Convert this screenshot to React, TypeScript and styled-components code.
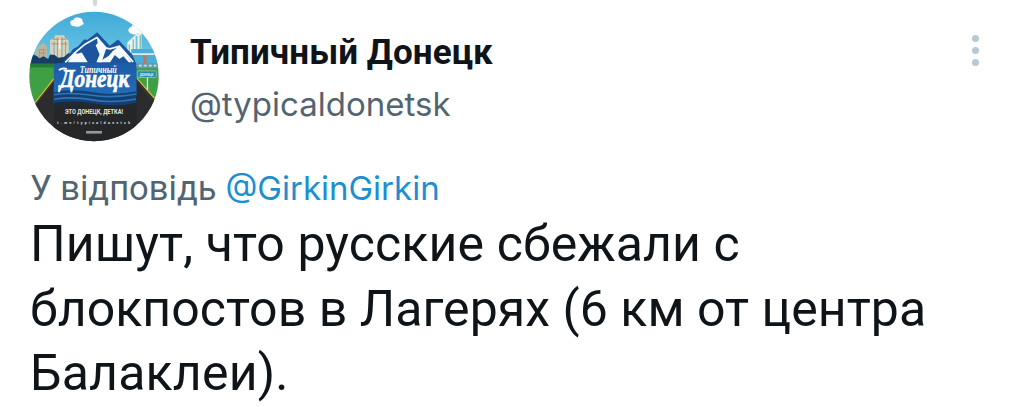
import React from "react";
import styled, { createGlobalStyle } from "styled-components";

interface LineProps {
  $spacing: number;
}

const App = () => {
  return (
    <>
      <GlobalStyle />
      <Tweet>
        <ThreadLine />
        <Header>
          <Avatar />
          <Names>
            <DisplayName>Типичный Донецк</DisplayName>
            <Handle>@typicaldonetsk</Handle>
          </Names>
          <MoreButton aria-label="More">
            <Dot />
            <Dot />
            <Dot />
          </MoreButton>
        </Header>
        <Reply>
          <ReplyText>У відповідь</ReplyText>
          <Mention href="#">@GirkinGirkin</Mention>
        </Reply>
        <Body>
          <Line $spacing={0.12}>Пишут, что русские сбежали с</Line>
          <Line $spacing={0.05}>блокпостов в Лагерях (6 км от центра</Line>
          <Line $spacing={0.2}>Балаклеи).</Line>
        </Body>
      </Tweet>
    </>
  );
};

const Avatar = () => (
  <AvatarSvg viewBox="28 34 394 394">
    <defs>
      <clipPath id="round">
        <circle cx="225" cy="231" r="196" />
      </clipPath>
      <linearGradient id="sky" x1="0" y1="0" x2="0" y2="1">
        <stop offset="0" stopColor="#3fa9d6" />
        <stop offset="1" stopColor="#74cbe8" />
      </linearGradient>
      <linearGradient id="badge" x1="0" y1="0" x2="0" y2="1">
        <stop offset="0" stopColor="#1d5ba8" />
        <stop offset="1" stopColor="#2272bf" />
      </linearGradient>
    </defs>
    <g clipPath="url(#round)">
      <rect x="20" y="30" width="410" height="180" fill="url(#sky)" />
      {/* clouds */}
      <path d="M154 72q-4-10 8-12q6-12 18-7q12 2 10 11q8 6-2 12q-14 8-22 2q-10 2-12-6z" fill="#fff" />
      <path d="M329 92q0-10 10-12q2-8 10-6l20-14 10 46q-8-8-18-6q-14 6-20 2q-10-2-12-10z" fill="#fff" />
      {/* buildings on the left */}
      <path d="M48 190v-38l12-16 12-8 10 12v50z" fill="#b9b5a5" />
      <path d="M92 182v-62l12-4 4-10h26l4 10 10 6v60z" fill="#d9d3bd" />
      <path d="M100 118h40M96 132h48M56 150h22M58 160h20" stroke="#c08a4e" strokeWidth="3" />
      <path d="M104 124v50M114 112v62M128 112v62M139 124v50M60 152v20M72 152v20" stroke="#7fa3ab" strokeWidth="3" />
      <path d="M121 118v30" stroke="#f6f2df" strokeWidth="5" />
      <path d="M28 210v-38l10-8 12 4 10 8 12-6 14 8 6-14 14 2 10 8 18-2 14-12 20 10v50z" fill="#173d64" />
      {/* buildings on the right */}
      <path d="M326 128l26-24 17-6v82h-43z" fill="#e9f4f2" />
      <path d="M332 134v40M344 118v50" stroke="#7fc0a4" strokeWidth="4" />
      <path d="M354 108v56" stroke="#75c3dc" strokeWidth="6" />
      <path d="M365 106v56" stroke="#50a985" strokeWidth="3" />
      <path d="M338 148h84v56h-84z" fill="#4caed8" />
      <path d="M340 163h72" stroke="#d7edf0" strokeWidth="5" />
      <path d="M374 168h10v22h-10z" fill="#cf7153" />
      <path d="M338 190h84v18h-84z" fill="#5c9db5" />
      <path d="M346 198h68" stroke="#e0d7c0" strokeWidth="5" strokeDasharray="9 6" />
      {/* grass and road */}
      <path d="M20 192h86v130H20zM350 206h80v120h-80z" fill="#3e9f43" />
      <path d="M20 192h86v12H20z" fill="#267c3b" />
      <path d="M104 236l-62 78v120h366V296l-55-62z" fill="#2b2c2e" />
      <path d="M104 237l-60 76M354 235l54 62" stroke="#d8b63f" strokeWidth="4" fill="none" />
      <path d="M104 245l-56 72M354 243l48 60" stroke="#4a3c2c" strokeWidth="3" fill="none" />
      <path d="M104 290h250v142H104z" fill="#252628" />
      {/* road sign */}
      <path d="M387 232v39" stroke="#e6eee8" strokeWidth="4" />
      <rect x="356" y="214" width="58" height="20" rx="3" fill="#258cad" stroke="#a1d4d5" strokeWidth="2" />
      <SvgText x="364" y="229" fontSize="11" textLength="42">ДОНЕЦК</SvgText>
      {/* mountains */}
      <path d="M126 194l36-46 14-8 20-22 8 2 31-23 38 41 25-19 43 45 14 34z" fill="#1c559d" />
      <path d="M138 188l34-33 26-22 36-20 28 32 12 2 28-8 42 48" stroke="#f5fafc" strokeWidth="5" fill="none" />
      <path d="M164 158l10 4 14-4 18 30h-60z" fill="#f5fafc" />
      <path d="M234 112l28 34-14 42h-16l10-24-12-28 6-6z" fill="#f5fafc" />
      <path d="M302 138l38 50h-10l-16-18-12 8-14-12-14 22h-36l32-20 12-14z" fill="#f5fafc" />
      <path d="M103 202q0-12 14-12h221q16 0 16 12v86q-52 14-122 13-74-3-129 12z" fill="url(#badge)" />
      {/* waves */}
      <path d="M103 279q54-12 118 0t132-3v34q-54 18-130 6-64-10-120 0z" fill="#153f73" />
      <path d="M104 286q54-8 114 2t135-4M104 300q56-9 116 2t133-3" stroke="#2e76b7" strokeWidth="5" fill="none" />
      <path d="M104 311q64-9 120 2t129-2v14H104z" fill="#202a35" />
      <Script x="182" y="219" fontSize="30" textLength="112" lengthAdjust="spacingAndGlyphs">
        Типичный
      </Script>
      <Brand x="122" y="264" fontSize="76" textLength="210" lengthAdjust="spacingAndGlyphs">
        Донецк
      </Brand>
      <path d="M119 212q8-8 24-4M118 258q6 8 16 2" stroke="#fff" strokeWidth="6" fill="none" />
      <SvgText x="137" y="346" fontSize="24" textLength="176" lengthAdjust="spacingAndGlyphs">
        ЭТО ДОНЕЦК, ДЕТКА!
      </SvgText>
      <SvgText x="114" y="375" fontSize="10" textLength="220">
        t.me/typicaldonetsk
      </SvgText>
      <rect x="201" y="396" width="48" height="8" fill="#96999a" />
    </g>
  </AvatarSvg>
);

export default App;

const GlobalStyle = createGlobalStyle`
  * {
    box-sizing: border-box;
  }
  body {
    margin: 0;
    background-color: #fff;
    font-family: Roboto, "Liberation Sans", sans-serif;
  }
`;

const Tweet = styled.article`
  width: 1024px;
  height: 407px;
  padding: 0 29px;
  display: flex;
  flex-direction: column;
  overflow: hidden;
`;

const ThreadLine = styled.div`
  width: 4px;
  height: 6px;
  margin: 0 0 5px 64px;
  flex: none;
  border-radius: 0 0 2px 2px;
  background-color: #cfd9de;
`;

const Header = styled.header`
  height: 131px;
  display: flex;
  align-items: flex-start;
`;

const AvatarSvg = styled.svg`
  width: 130px;
  height: 131px;
  flex: none;
`;

const SvgText = styled.text`
  font-family: Roboto, sans-serif;
  font-weight: 700;
  fill: #e4e6e7;
`;

const Script = styled.text`
  font-family: "Liberation Serif", serif;
  font-style: italic;
  font-weight: 700;
  fill: #fff;
`;

const Brand = styled(Script)`
  stroke: #fff;
  stroke-width: 2px;
`;

const Names = styled.div`
  margin: 16px 0 0 31px;
  display: flex;
  flex-direction: column;
  flex: 1;
`;

const DisplayName = styled.h1`
  margin: 0;
  font-size: 35px;
  font-weight: 700;
  line-height: 52px;
  letter-spacing: 0.07px;
  color: #0f1419;
  white-space: nowrap;
`;

const Handle = styled.span`
  font-family: Inter, sans-serif;
  font-size: 33px;
  line-height: 50px;
  color: #536471;
`;

const MoreButton = styled.button`
  width: 7px;
  margin: 24px 16px 0 0;
  padding: 0;
  border: none;
  background: none;
  display: flex;
  flex-direction: column;
  align-items: center;
  gap: 5px;
  cursor: pointer;
`;

const Dot = styled.span`
  width: 7px;
  height: 7px;
  border-radius: 50%;
  background-color: #b9c9d3;
`;

const Reply = styled.p`
  margin: 25px 0 0 1px;
  display: flex;
  align-items: baseline;
  gap: 9px;
  line-height: 42px;
  color: #536471;
`;

const ReplyText = styled.span`
  font-size: 34.5px;
`;

const Mention = styled.a`
  font-family: Inter, sans-serif;
  font-size: 33px;
  color: #1d8fd1;
  text-decoration: none;
`;

const Body = styled.div`
  margin: 3px 0 0 1px;
  display: flex;
  flex-direction: column;
`;

const Line = styled.span<LineProps>`
  font-size: 50px;
  line-height: 64.5px;
  letter-spacing: ${(props) => props.$spacing}px;
  color: #0f1419;
  white-space: nowrap;
`;
